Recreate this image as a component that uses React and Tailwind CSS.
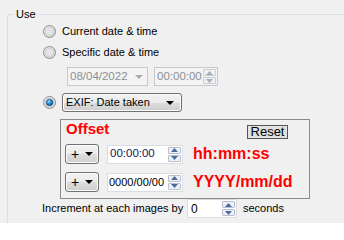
import React from "react";

function Radio({ checked }) {
  return (
    <svg width="13" height="13" viewBox="0 0 13 13" className="shrink-0">
      <defs>
        <radialGradient id="rg" cx="0.4" cy="0.4" r="0.7">
          <stop offset="0" stopColor="#ffffff" />
          <stop offset="1" stopColor="#cfcfcf" />
        </radialGradient>
        <radialGradient id="dot" cx="0.4" cy="0.35" r="0.7">
          <stop offset="0" stopColor="#8fdcff" />
          <stop offset="0.5" stopColor="#2a8ad4" />
          <stop offset="1" stopColor="#0b3f7a" />
        </radialGradient>
      </defs>
      <circle cx="6.5" cy="6.5" r="6" fill="url(#rg)" stroke="#8c8e8f" strokeWidth="1" />
      <circle cx="6.5" cy="6.5" r="4.2" fill="#e4e4e4" stroke="#c8c8c8" strokeWidth="0.8" />
      {checked && <circle cx="6.5" cy="6.5" r="3.3" fill="url(#dot)" stroke="#1d4f86" strokeWidth="0.6" />}
    </svg>
  );
}

function Spin({ disabled }) {
  const arrow = disabled ? "#a9aeb5" : "#4b6a9e";
  return (
    <div className="flex flex-col shrink-0 w-[14px] h-full py-[1px] pr-[1px] gap-[1px]">
      <div className={`flex-1 flex items-center justify-center border rounded-[1px] bg-[#eef1f5] ${disabled ? "border-[#c9ccd1]" : "border-[#b7bfcc]"}`}>
        <svg width="7" height="4" viewBox="0 0 7 4"><path d="M0 4 L3.5 0 L7 4 Z" fill={arrow} /></svg>
      </div>
      <div className={`flex-1 flex items-center justify-center border rounded-[1px] bg-[#eef1f5] ${disabled ? "border-[#c9ccd1]" : "border-[#b7bfcc]"}`}>
        <svg width="7" height="4" viewBox="0 0 7 4"><path d="M0 0 L7 0 L3.5 4 Z" fill={arrow} /></svg>
      </div>
    </div>
  );
}

function Arrow({ color = "#000" }) {
  return (
    <svg width="8" height="4" viewBox="0 0 8 4" className="shrink-0">
      <path d="M0 0 L8 0 L4 4 Z" fill={color} />
    </svg>
  );
}

function Btn({ children, className }) {
  return (
    <div
      className={`flex shrink-0 items-center border border-[#707070] rounded-[3px] bg-[linear-gradient(#f2f2f2_0%,#ebebeb_50%,#dddddd_51%,#cfcfcf_100%)] shadow-[inset_0_0_0_1px_#fcfcfc] ${className}`}
    >
      {children}
    </div>
  );
}

export default function App() {
  return (
    <div className="w-[344px] h-[223px] bg-[#f0f0f0] overflow-hidden font-['Liberation_Sans',Arial,sans-serif] text-[11px] text-black">
      <fieldset className="ml-[7px] mt-[8px] w-[345px] h-[218px] border border-[#d5dfe5] rounded-[3px]">
        <legend className="ml-[6px] px-[2px] leading-[13px]">Use</legend>

        <div className="flex items-center h-[21px] pl-[35px] gap-[6px]">
          <Radio />
          <span>Current date &amp; time</span>
        </div>
        <div className="flex items-center h-[21px] pl-[35px] gap-[6px]">
          <Radio />
          <span>Specific date &amp; time</span>
        </div>

        <div className="flex mt-[4px] h-[19px] pl-[59px] gap-[6px]">
          <div className="flex items-center w-[81px] h-full border border-[#c5c9ce] bg-[#f4f4f4] pl-[2px] pr-[4px] text-[#8a8f96] text-[11.5px]">
            <span className="flex-1">08/04/2022</span>
            <Arrow color="#a7abb0" />
          </div>
          <div className="flex items-center w-[64px] h-full border border-[#c5c9ce] bg-[#f4f4f4] pl-[2px] text-[#8a8f96] text-[11.5px]">
            <span className="flex-1">00:00:00</span>
            <Spin disabled />
          </div>
        </div>

        <div className="flex items-center mt-[7px] h-[19px] pl-[35px] gap-[6px]">
          <Radio checked />
          <Btn className="w-[120px] h-full pl-[3px] pr-[7px] text-[11px]">
            <span className="flex-1">EXIF: Date taken</span>
            <Arrow />
          </Btn>
        </div>

        <div className="ml-[52px] mt-[7px] w-[250px] h-[80px] border border-[#8a8a8a] pl-[4px] pr-[21px] flex flex-col">
          <div className="flex items-start h-[19px]">
            <span className="ml-[1px] text-[15px] leading-[17px] font-bold text-[#ff0000]">Offset</span>
            <div className="ml-auto mt-[5px] w-[41px] h-[14px] border border-[#555] bg-[#e1e1e1] flex items-center justify-center text-[13px] leading-[12px]">
              Reset
            </div>
          </div>
          <div className="flex items-center mt-[5px] h-[20px]">
            <Btn className="w-[34px] h-full pl-[5px] pr-[5px] text-[14px]">
              <span className="flex-1">+</span>
              <Arrow />
            </Btn>
            <div className="ml-[8px] shrink-0 flex items-center w-[76px] h-[19px] border border-[#d9dce0] bg-white pl-[2px] text-[11.5px] text-[#14145a]">
              <span className="flex-1">00:00:00</span>
              <Spin />
            </div>
            <span className="ml-[10px] text-[16px] font-bold text-[#ff0000] whitespace-nowrap">hh:mm:ss</span>
          </div>
          <div className="flex items-center mt-[8px] h-[20px]">
            <Btn className="w-[34px] h-full pl-[5px] pr-[5px] text-[14px]">
              <span className="flex-1">+</span>
              <Arrow />
            </Btn>
            <div className="ml-[8px] shrink-0 flex items-center w-[76px] h-[19px] border border-[#d9dce0] bg-white pl-[1px] text-[11px]">
              <span className="flex-1">0000/00/00</span>
              <Spin />
            </div>
            <span className="ml-[10px] text-[16px] font-bold text-[#ff0000] whitespace-nowrap">YYYY/mm/dd</span>
          </div>
        </div>

        <div className="flex items-center h-[19px] pl-[34px]">
          <span className="w-[145px]">Increment at each images by</span>
          <div className="flex items-center w-[50px] h-full border border-[#d9dce0] bg-white pl-[3px] text-[12px]">
            <span className="flex-1">0</span>
            <Spin />
          </div>
          <span className="ml-[6px]">seconds</span>
        </div>
      </fieldset>
    </div>
  );
}
